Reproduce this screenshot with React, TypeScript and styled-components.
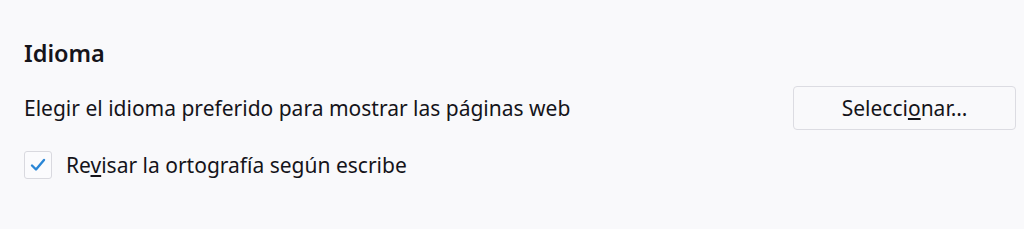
import { createGlobalStyle } from 'styled-components';
import styled from 'styled-components';

const GlobalStyle = createGlobalStyle`
  html, body {
    margin: 0;
    padding: 0;
    background: #f9f9fb;
  }
  body {
    font-family: 'Noto Sans', 'Open Sans', sans-serif;
    color: #15141a;
  }
`;

const Section = styled.section`
  padding: 37px 8px 0 24px;
  width: 1024px;
  box-sizing: border-box;
`;

const Heading = styled.h2`
  margin: 0 0 17px;
  font-size: 23.5px;
  font-weight: 600;
  line-height: 32px;
`;

const Row = styled.div`
  display: flex;
  align-items: center;
  justify-content: space-between;
  height: 44px;
`;

const Label = styled.span`
  font-size: 21px;
`;

const Button = styled.button`
  width: 223px;
  height: 44px;
  border: 1px solid #dcdce2;
  border-radius: 4px;
  background: #f9f9fb;
  color: #15141a;
  font-family: inherit;
  font-size: 21px;
  padding: 0;
`;

const CheckRow = styled.label`
  display: flex;
  align-items: center;
  gap: 14px;
  margin-top: 21px;
  font-size: 21px;
`;

const Box = styled.span`
  width: 28px;
  height: 28px;
  box-sizing: border-box;
  border: 1px solid #d9d9df;
  border-radius: 3px;
  background: #fbfbfd;
  display: flex;
  align-items: center;
  justify-content: center;
`;

export default function App() {
  return (
    <>
      <GlobalStyle />
      <Section>
        <Heading>Idioma</Heading>
        <Row>
          <Label>Elegir el idioma preferido para mostrar las páginas web</Label>
          <Button>
            Selecci<u>o</u>nar…
          </Button>
        </Row>
        <CheckRow>
          <Box>
            <svg width="16" height="14" viewBox="0 0 16 14">
              <path d="M2 7.5 L6 11.5 L14 2" fill="none" stroke="#2a86d6" strokeWidth="2.4" strokeLinecap="round" strokeLinejoin="round" />
            </svg>
          </Box>
          <span>
            Re<u>v</u>isar la ortografía según escribe
          </span>
        </CheckRow>
      </Section>
    </>
  );
}
